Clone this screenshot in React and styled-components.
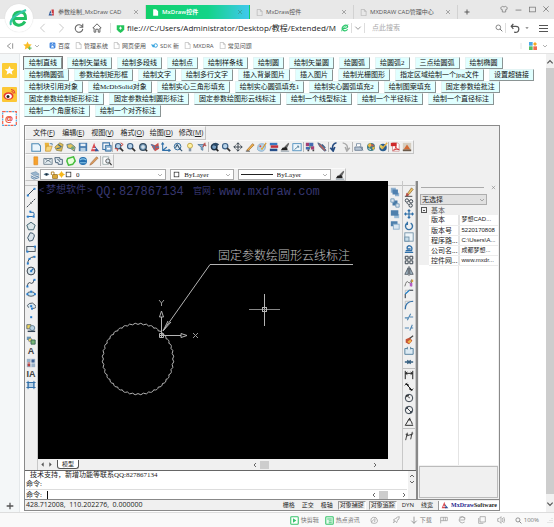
import React from "react";
import styled, { createGlobalStyle, css } from "styled-components";

const GlobalStyle = createGlobalStyle`
  * {
    box-sizing: border-box;
  }
  body {
    margin: 0;
    background: #fff;
    color: #222;
    font-family: "Open Sans", "Noto Sans CJK SC", sans-serif;
    font-size: 7px;
    line-height: 10px;
  }
  button, input, select {
    font: inherit;
    color: inherit;
    margin: 0;
    padding: 0;
    border: 0;
    background: none;
    border-radius: 0;
    outline: none;
  }
  svg {
    display: block;
    flex: none;
  }
`;

/* ---------- icons ---------- */

const dark = "#3c4650";
const blue = "#2f6fa8";
const line = { fill: "none", stroke: dark, strokeWidth: 1.2 };
const dot = (x, y) => <rect x={x - 1} y={y - 1} width="2.4" height="2.4" fill="#2a7fd0" />;
const lens = (
  <>
    <circle cx="5" cy="5" r="3.2" fill="#b9d4ea" stroke="#3d6288" strokeWidth="1.4" />
    <path d="M7.4 7.4L11 11" stroke="#333" strokeWidth="2" />
  </>
);

const icons = {
  page: <path d="M2 .8h5.500L10.500 4v7.500H2zM7.500 1v3h3" fill="none" stroke="#aaa" />,
  cad: (
    <>
      <path d="M1 11L4 2l3 9z" fill="#2b5797" />
      <path d="M6 1h4v10H7z" fill="#c9373f" />
      <path d="M3 8h6" stroke="#fff" />
    </>
  ),
  cadRed: (
    <>
      <path d="M1 11L5 1l3 10z" fill="#d94b50" />
      <path d="M6 11V5l5 6z" fill="#32569a" />
      <path d="M3 8h4" stroke="#fff" strokeWidth="1.2" />
    </>
  ),
  fileNew: <path d="M1 2h8l2.500 3v6H1z" fill="#eaf5fc" stroke="#4b89b5" strokeWidth="1.300" />,
  open: (
    <>
      <path d="M2 1h5l1 10H3z" fill="#e9b33c" />
      <path d="M4 5h7l-2 6H3z" fill="#f8d77d" stroke="#bb8623" strokeWidth=".7" />
      <path d="M8 2h3v2" fill="none" stroke="#4277a0" />
    </>
  ),
  openWeb: (
    <>
      <path d="M1 6l6-5 4 2-2 8-6-1z" fill="#e4bf55" stroke="#7c7440" strokeWidth=".8" />
      <path d="M5 3l4 3M3 8l5-1" stroke="#38658b" strokeWidth="1.300" />
    </>
  ),
  openKey: (
    <>
      <path d="M1 3l5-1 5 4-1 5-4-3-4-1z" fill="#e5c75d" stroke="#517386" />
      <circle cx="8" cy="7" r="2" fill="#71a57c" />
    </>
  ),
  save: (
    <>
      <rect x="1" y="1" width="10" height="10" fill="#4479ae" />
      <rect x="3" y="2" width="6" height="3" fill="#e6eff7" />
      <rect x="3" y="7" width="6" height="4" fill="#b8d1e5" />
    </>
  ),
  saveAs: (
    <>
      <path d="M1 1h8v8H1z" fill="#fff" stroke="#3e75a8" strokeWidth="1.300" />
      <path d="M4 4h7v7H4z" fill="#8cb4d5" stroke="#336a9b" />
      <path d="M6 8h4" stroke="#fff" strokeWidth="2" />
    </>
  ),
  zoomWin: (
    <>
      {lens}
      <path d="M8 1l3 2-3 2M1 8h3v3" fill="none" stroke="#c84840" strokeWidth="1.2" />
    </>
  ),
  zoomAll: lens,
  zoomExt: (
    <>
      <circle cx="6" cy="6" r="4" fill="#7fa5c2" stroke="#344d63" strokeWidth="1.500" />
      <path d="M3.500 6h5M6 3.500v5" stroke="#fff" />
      <path d="M9 9l2 2" stroke="#222" strokeWidth="1.800" />
    </>
  ),
  hand: (
    <>
      <path d="M1 2l5 2 4-3 1 7-5 3-3-4z" fill="#c5504d" />
      <path d="M1 3l4 2v4M7 6h4" fill="none" stroke="#477cb1" strokeWidth="1.500" />
    </>
  ),
  ucs: <path d="M2 1v9h9M2 10l5-4M.5 3L2 1l1.500 2M9 8.500l2 1.500-2 1.500" fill="none" stroke={blue} strokeWidth="1.300" />,
  orbit: (
    <>
      <circle cx="5.500" cy="5.500" r="4" fill="#dbe9f3" stroke="#366d9c" strokeWidth="1.200" />
      <path d="M3 7l2-4 3 5M8 8l3 3" fill="none" stroke="#31516c" strokeWidth="1.300" />
    </>
  ),
  bulb: (
    <>
      <circle cx="6" cy="4.500" r="3" fill="#fff2a0" stroke="#b99b3a" />
      <path d="M4.500 8.500h3M4.500 10.500h3" stroke="#607890" strokeWidth="1.300" />
    </>
  ),
  filter: (
    <>
      <path d="M1 3h9L7 6v4L5 9V6z" fill="#8eb3d2" stroke="#3b668d" strokeWidth=".8" />
      <path d="M8 2l3 3M10 1L7 6" stroke="#c24e48" strokeWidth="1.300" />
    </>
  ),
  eyeZoom: (
    <>
      <circle cx="5" cy="6" r="3.300" fill="#779fc3" stroke="#20354a" strokeWidth="1.800" />
      <path d="M2 3q5-4 9 0L8 5" fill="#2b4966" />
      <path d="M7.500 8.500L10 11" stroke="#222" strokeWidth="2" />
    </>
  ),
  pan: <path d="M6 1v10M1 6h10M4 3l2-2 2 2M4 9l2 2 2-2M3 4L1 6l2 2M9 4l2 2-2 2" {...line} />,
  pencil: (
    <>
      <path d="M2 10L9 2l2 1.500-7 7z" fill="#efb04d" stroke="#8c5a20" strokeWidth=".7" />
      <path d="M1 11h5" stroke="#444" />
    </>
  ),
  palette: (
    <>
      <path d="M1 6q0-4 5-4t4 5-6 4-3-5z" fill="#b6d3e8" stroke="#6395bd" strokeWidth=".7" />
      <circle cx="4" cy="5" r="1.200" fill="#d95040" />
      <circle cx="6" cy="8" r="1.200" fill="#e2a82a" />
      <path d="M7 7l4-6" stroke="#d59a3c" strokeWidth="1.500" />
    </>
  ),
  layersColor: (
    <>
      <rect x="1" y="1" width="9" height="3" fill="#3978c0" />
      <rect x="2" y="4" width="9" height="3" fill="#c0303c" />
      <rect x="1" y="8" width="9" height="3" fill="#264e8a" />
    </>
  ),
  brush: (
    <>
      <path d="M5 6l5-5 1 1-3 6z" fill="#666" />
      <path d="M1 10l2-3 4-1 2 2v2z" fill="#222" />
      <path d="M1 11h10" stroke="#798b97" />
    </>
  ),
  window: (
    <>
      <rect x="1" y="2" width="10" height="8.500" fill="#eef6fb" stroke="#4489bb" />
      <path d="M3 9l5-4M6 5h2v2" fill="none" stroke="#4a7794" />
    </>
  ),
  blocks: (
    <>
      <path d="M1 1h4v4H1zM7 5h4v4H7z" fill="#a43f74" />
      <path d="M5 1h5v4H5zM1 6h5v3H1z" fill="#436bb1" />
      <path d="M3 9h2v2H3zM9 9h2v2H9z" fill="#454545" />
      <path d="M5 5h2v2H5z" fill="#58a060" />
    </>
  ),
  pick: (
    <>
      <path d="M1 1l4 2 6 7-2 1-6-6z" fill="#bb625d" stroke="#42658b" />
      <path d="M6 3l4 4" stroke="#345780" strokeWidth="1.500" />
    </>
  ),
  undo: <path d="M9 1Q3 2 4.500 10M1.500 7L5 11l2-5" fill="none" stroke="#254b80" strokeWidth="1.900" />,
  redo: <path d="M2 1q7 1 5.500 9M10.500 7L7 11 5 6" fill="none" stroke="#aaa" strokeWidth="1.700" />,
  print: (
    <>
      <path d="M3 5V2h5v3" fill="#fff" stroke="#778ba0" />
      <path d="M1 6h9v4H1zM7 5l4 5" fill="#b6c4d3" stroke="#667991" />
    </>
  ),
  globe: (
    <>
      <circle cx="6" cy="6" r="4.800" fill="#3f7d88" />
      <path d="M2 4l3-3 2 3-3 3zM7 7l4-2-2 5z" fill="#edb942" />
      <path d="M6 2l4 2-3 2z" fill="#cc594a" />
      <path d="M3 8l3 1" stroke="#fff" />
    </>
  ),
  globeEdit: (
    <>
      <circle cx="6" cy="6.500" r="4.500" fill="#295d8f" />
      <path d="M3 3l3 2-1 4-3-3z" fill="#e4cf62" />
      <path d="M5 8l6-7" stroke="#e6b143" strokeWidth="1.700" />
    </>
  ),
  pdf: (
    <>
      <path d="M3 1h6l2 2v8H3z" fill="#fff" stroke="#b66" strokeWidth=".7" />
      <rect x="1" y="1" width="7" height="4" fill="#cf282a" />
      <path d="M4 10q3-2 3-5 0 4 4 4-4-1-7 1" fill="none" stroke="#cf282a" />
    </>
  ),
  image: (
    <>
      <rect x="1" y="1" width="10" height="10" fill="#d5cdbf" />
      <path d="M2 9l4-6 4 6z" fill="#d36a35" />
      <path d="M1 9h10v2H1z" fill="#6b5949" />
    </>
  ),
  clip: <path d="M3.500 1h4.500v9.500H3.500z" fill="#f6a12c" stroke="#e28a19" strokeWidth=".8" />,
  photo: (
    <>
      <path d="M1 3h10v7H1z" fill="#e6eef2" stroke="#657785" />
      <path d="M3 8l3-3 4 3M2 3l4 3 4-3" fill="none" stroke="#657785" />
    </>
  ),
  cloud: <path d="M1 2h6v2h3v6H5V8H2zM4 4q2 0 3 3" fill="#e2ebf1" stroke="#50687d" strokeWidth="1.200" />,
  shape: <path d="M2 3l7-2 2 5-3 4-5 1-2-5z" fill="#e8ffdd" stroke="#46bd3d" strokeWidth="1.800" />,
  earth: (
    <>
      <circle cx="6" cy="6" r="4.800" fill="#236eae" />
      <path d="M2 5q4-3 8 0M2.500 8h7" fill="none" stroke="#8cc7e8" strokeWidth="1.300" />
    </>
  ),
  crayon: <path d="M1 11l1.500-3L9 1l2 1.500L4 9.500z" fill="#d89c5d" stroke="#995b32" strokeWidth=".6" />,
  findPage: (
    <>
      <path d="M1 1h7v9H1z" fill="#fff" stroke="#9aa" />
      <circle cx="7" cy="6" r="2.500" fill="#dde7ee" stroke="#444" />
      <path d="M9 8l2.500 3" stroke="#333" strokeWidth="1.500" />
    </>
  ),
  layers: (
    <>
      <path d="M1 4l6-2 4 3-6 2z" fill="#9bb6ce" stroke="#6488a8" strokeWidth=".7" />
      <path d="M1 7l4 2 6-2M1 9l4 2 6-2" fill="none" stroke="#5d86ad" strokeWidth="1.200" />
    </>
  ),
  eye: (
    <>
      <path d="M1 6q5-5 10 0-5 4-10 0z" fill="#54748b" />
      <circle cx="6" cy="6" r="1.700" fill="#162733" />
    </>
  ),
  unlock: (
    <>
      <path d="M2 6V1.500h4V6" fill="none" stroke="#b58221" strokeWidth="1.400" />
      <rect x="4" y="5.500" width="7" height="5.500" fill="#d9a634" stroke="#8f6310" />
    </>
  ),
  sun: (
    <>
      <circle cx="6" cy="6" r="3.800" fill="#f6b71c" />
      <path d="M6 .5v11M.5 6h11" stroke="#f6b71c" strokeWidth="1.500" />
    </>
  ),
  swatch: <rect x="2" y="2" width="8" height="8" fill="#fff" stroke="#222" strokeWidth="1.200" />,
  line: <>{<path d="M2 10l8-8" {...line} />}{dot(2, 10)}{dot(10, 2)}</>,
  ray: (
    <>
      <path d="M1 11L11 1" {...line} strokeDasharray="3 1" />
      <circle cx="6" cy="6" r="1.300" fill="#888" />
    </>
  ),
  polyline: <>{<path d="M1 9h7q3-1 1-5H5" {...line} stroke={blue} />}{dot(2, 9)}{dot(9, 9)}{dot(5, 3)}</>,
  polygon: <path d="M6 1.500L11 5 9 10.500H3L1 5z" fill="#dce7ea" stroke="#466874" strokeWidth="1.200" />,
  blob: <path d="M5 1q5 0 5 4l-2 5-4 1-2-4z" fill="#dbe5ec" stroke="#425a6c" strokeWidth="1.200" />,
  rect: <>{<rect x="1" y="3" width="10" height="6" fill="#e9eff2" stroke={dark} />}{dot(1.500, 9)}{dot(10.500, 3)}</>,
  arc: <>{<path d="M2 11Q2 3 10 2" {...line} />}{dot(2, 10)}{dot(10, 2)}{dot(4, 4.500)}</>,
  circle: (
    <>
      <circle cx="6" cy="6" r="4.700" fill="#d9e6ed" stroke={dark} strokeWidth="1.200" />
      <path d="M6 6l3-3" stroke={blue} strokeWidth="1.500" />
      {dot(6, 6)}
    </>
  ),
  spline: <>{<path d="M1.500 10q1-6 4-4t4-4" {...line} />}{dot(1.500, 10)}{dot(10, 2)}</>,
  ellipse: <>{<ellipse cx="6" cy="6" rx="4.600" ry="2.700" fill="#cae4f1" stroke={dark} />}{dot(1.500, 6)}{dot(10.500, 6)}{dot(6, 3)}</>,
  ellipseArc: <>{<path d="M3 8Q0 5 4 3t7 2-4 4" fill="#d7e6ef" stroke={dark} />}{dot(7, 9)}{dot(6, 6)}</>,
  point: dot(6, 6),
  hatch: (
    <>
      <path d="M1 2h5v5H1z" fill="#edd35d" stroke="#576470" />
      <circle cx="7.500" cy="6" r="3" fill="#b9d2e1" stroke="#55748a" />
      <path d="M2 10h9" stroke="#345" strokeWidth="1.700" />
    </>
  ),
  block: (
    <>
      <path d="M1 2h5v4H1z" fill="#6895b4" />
      <circle cx="5" cy="6" r="2.200" fill="#ead765" stroke="#668" strokeWidth=".6" />
      <path d="M6 6h5v5H6z" fill="#76b675" stroke="#345f57" />
    </>
  ),
  table: (
    <>
      <path d="M1 1h10v10H1z" fill="#9bb2c8" />
      <path d="M2 5h3v5H2z" fill="#b84141" />
      <path d="M6 2h4v4H6z" fill="#42679b" />
      <path d="M1 6h10M6 1v10" stroke="#eee" />
    </>
  ),
  frame: (
    <>
      <rect x="2.500" y="3" width="7" height="6" fill="#b8d1e6" stroke={blue} />
      <path d="M.5 3h11M.5 9h11M2.500 1v10M9.500 1v10" stroke={blue} strokeWidth="1.100" />
    </>
  ),
  front: (
    <>
      <path d="M1 1h6v6H1zM6 7h5v4H6z" fill="#8fb0ce" />
      <rect x="3" y="3" width="6.500" height="6" fill="#4f80b0" />
    </>
  ),
  back: (
    <>
      <rect x="3" y="3" width="6" height="6" fill="#4779a6" />
      <path d="M1 1h4v4H1zM7 7h4v4H7z" fill="#e0e9f0" stroke="#6e96b8" />
    </>
  ),
  above: (
    <>
      <rect x="5" y="6" width="6" height="5" fill="#9bbdd8" />
      <rect x="1" y="1.500" width="9" height="6.500" fill="#4e80ad" />
    </>
  ),
  below: (
    <>
      <rect x="1" y="1.500" width="8" height="6" fill="#4e80ad" />
      <rect x="4" y="5" width="7" height="6" fill="#dce8f1" stroke="#86abc9" />
    </>
  ),
  erase: (
    <>
      <path d="M4 8l5-7 2 2-5 6z" fill="#efc467" stroke="#75521f" strokeWidth=".7" />
      <path d="M3 7l3 2-1 2H2z" fill="#bb5048" />
      <path d="M1 11.200h9" stroke="#333" />
    </>
  ),
  copy: (
    <>
      <circle cx="3.500" cy="3" r="2" {...line} />
      <circle cx="8.500" cy="4" r="2" {...line} />
      <circle cx="8" cy="9" r="2" {...line} />
      <path d="M3 6l3 2" stroke={dark} />
    </>
  ),
  move: <path d="M6 1v10M1 6h10M4.500 2.500L6 1l1.500 1.500M4.500 9.500L6 11l1.500-1.500M2.500 4.500L1 6l1.500 1.500M9.500 4.500L11 6 9.500 7.500" fill="none" stroke={blue} strokeWidth="1.400" />,
  rotate: <path d="M8 2.500a4.200 4.200 0 1 1-4 0M4 1v3H1.500" fill="none" stroke="#3672a6" strokeWidth="1.700" />,
  scale: (
    <>
      <rect x="1" y="1" width="10" height="10" fill="#edf4f8" stroke="#6b8ca4" />
      <rect x="1" y="6" width="5" height="5" fill="#c8deeb" stroke="#6b8ca4" />
    </>
  ),
  offset: <path d="M1 10h10M2 8h7Q11 3 6 2 3 3 4 6h4" fill="none" stroke={blue} strokeWidth="1.600" />,
  array: <path d="M1.500 1.500h3.500v3.500H1.500zM7 1.500h3.500v3.500H7zM1.500 7h3.500v3.500H1.500zM7 7h3.500v3.500H7z" {...line} />,
  mirror: <path d="M5 2v8H1zM7 2v8h4zM6 0v12" fill="#a9bdca" stroke={dark} strokeWidth=".9" />,
  reshape: (
    <>
      <path d="M1 10q2-8 4-5t4-3v8" {...line} stroke="#777" />
      <path d="M7 6h3v4H7z" fill="#b75cc5" />
      <path d="M9 2h2v3H9z" fill="#dfa336" />
    </>
  ),
  chamfer: (
    <>
      <path d="M1.500 11V1.500H11" fill="none" stroke="#aaa" strokeWidth=".8" />
      <path d="M1.500 11V6l5-4.500H11" fill="none" stroke={dark} strokeWidth="1.200" />
      <path d="M1.500 6l5-4.500" stroke="#2f8fd8" strokeWidth="1.300" />
    </>
  ),
  fillet: (
    <>
      <path d="M1.500 11V1.500H11" fill="none" stroke="#aaa" strokeWidth=".8" />
      <path d="M1.500 11Q1.500 2 11 1.500" fill="none" stroke={blue} strokeWidth="1.500" />
    </>
  ),
  trim: <path d="M1 7h4M7 6h4M4 10l4-8" fill="none" stroke="#4f86b3" strokeWidth="1.300" />,
  extend: <path d="M1 6h5M7 9l3-7M8 6h3" fill="none" stroke="#4f86b3" strokeWidth="1.300" />,
  explode: (
    <>
      <path d="M2 5l5-2 3 4-4 4-4-2z" fill="#c55336" />
      <path d="M4 8l4-3 1 3-3 2z" fill="#efb348" />
      <path d="M7 4l4-3" stroke="#444" strokeWidth="1.400" />
    </>
  ),
  breakAt: <path d="M4 3H1v7h10V3H8M4 1v3M8 1v3" fill="#dceaf3" stroke="#527f9d" strokeWidth="1.100" />,
  join: <path d="M1 6h10M4 4l2 2-2 2M8 4L6 6l2 2" fill="none" stroke="#365f80" strokeWidth="1.600" />,
  dimLinear: <path d="M1.500 1v10M10.500 1v10M2 4h8M4 2.500L2 4l2 1.500M8 2.500L10 4 8 5.500" fill="none" stroke="#222" strokeWidth="1.200" />,
  dimAligned: <path d="M2 2l8 8M1 4l3-3M8 11l3-3M3 3h2v2zM9 9H7V7z" fill="#222" stroke="#222" strokeWidth="1.200" />,
  dimRadius: (
    <>
      <circle cx="6" cy="6" r="4.500" {...line} />
      <path d="M3 3l4 3M3 3h3M3 3v2" stroke="#222" />
    </>
  ),
  dimDiameter: (
    <>
      <circle cx="6" cy="6" r="4.500" {...line} />
      <path d="M3 3l6 6M3 5V3h2M9 7v2H7" {...line} />
    </>
  ),
  dimAngle: <path d="M7 1L1.500 10H11M6 3q4 2 4 6M5 4l2-2 1 2" fill="none" stroke="#333" strokeWidth="1.200" />,
  dimEdit: <path d="M2 11L4 2M8 10l2-9M3 6l6-2M2 4h3M8 5l3-2" fill="none" stroke="#333" strokeWidth="1.100" />,
  paw: (
    <>
      <rect x="1" y="1" width="10" height="10" rx="2" fill="#3d83df" />
      <path d="M3.500 8.500L6 5.500l2.500 3v1h-5z" fill="#fff" />
      <path d="M3 5h1.500M5 3h2M8 5h1.500" stroke="#fff" strokeWidth="1.500" />
    </>
  ),
  star: (
    <>
      <path d="M6 .5l1.700 3.700 4 .3-3 2.800.9 4L6 9.300 2.400 11.300l.9-4-3-2.800 4-.3z" fill="#fbbd25" />
      <path d="M6.500 9.500h5M9 7v5" stroke="#59b756" strokeWidth="1.300" />
    </>
  ),
  link: (
    <>
      <circle cx="8" cy="6" r="3" fill="none" stroke="#38a4df" strokeWidth="1.700" />
      <path d="M0 4l6 1v4H3z" fill="#38a4df" />
    </>
  ),
  previous: <path d="M8 1L3 6l5 5" fill="none" stroke="#c8c8c8" strokeWidth="1.200" />,
  next: <path d="M4 1l5 5-5 5" fill="none" stroke="#c8c8c8" strokeWidth="1.200" />,
  down: <path d="M2 4l4 4 4-4" fill="none" stroke="#888" strokeWidth="1.300" />,
  caret: <path d="M1 4h10L6 9z" fill="#777" />,
  up: <path d="M2 8l4-4 4 4" fill="none" stroke="#555" strokeWidth="1.800" />,
  downDark: <path d="M2 4l4 4 4-4" fill="none" stroke="#555" strokeWidth="1.800" />,
  left: <path d="M8 2L4 6l4 4" fill="none" stroke="#444" strokeWidth="1.600" />,
  right: <path d="M4 2l4 4-4 4" fill="none" stroke="#444" strokeWidth="1.600" />,
  leftSolid: <path d="M8 2v8L4 6z" fill="#555" />,
  rightSolid: <path d="M4 2v8l4-4z" fill="#555" />,
  reload: <path d="M10 4.500A4.500 4.500 0 1 0 10.500 7M10.500 1v4h-4" fill="none" stroke="#666" strokeWidth="1.300" />,
  home: <path d="M1 6l5-5 5 5H9.500v5h-2V7.500h-3V11h-2V6z" fill="none" stroke="#666" strokeWidth="1.200" />,
  shield: (
    <>
      <path d="M1 1.500h10V7q-1 3-5 5Q2 10 1 7z" fill="#24c45b" />
      <path d="M6 3.500v4M4 5.500h4" stroke="#fff" strokeWidth="1.200" />
    </>
  ),
  e: (
    <>
      <path d="M10 8q-4 4-7 1t1-6 6 1q0 2-7 3" fill="none" stroke="#2dc76d" strokeWidth="1.900" />
      <path d="M1 11Q0 7 11 1" fill="none" stroke="#2dc76d" strokeWidth="1.200" />
    </>
  ),
  search: (
    <>
      <circle cx="5" cy="5" r="3.500" fill="none" stroke="#777" strokeWidth="1.300" />
      <path d="M7.500 7.500L11 11" stroke="#777" strokeWidth="1.500" />
    </>
  ),
  revert: <path d="M4 1L1.500 4 4 7M2 4h5q4 0 3.500 4T5 11" fill="none" stroke="#555" strokeWidth="1.500" />,
  menu: <path d="M0 2h12M0 6h12M0 10h12" stroke="#555" strokeWidth="1.500" />,
  shirt: <path d="M4 2L1 4l1 3h1.500v3.500h5V7H10l1-3-3-2q-2 2-4 0z" fill="none" stroke="#777" strokeWidth="1.100" />,
  min: <path d="M1 7h10" stroke="#777" strokeWidth="1.400" />,
  max: <rect x="1" y="2" width="10" height="8" fill="none" stroke="#777" strokeWidth="1.300" />,
  close: <path d="M2 2l8 8M10 2l-8 8" stroke="#777" strokeWidth="1.200" />,
  closeWhite: <path d="M2 2l8 8M10 2l-8 8" stroke="#3a8f80" strokeWidth="1.200" />,
  pageWhite: <path d="M2 .5h5L10.500 4v7.500H2z" fill="#fff" />,
  plus: <path d="M1 6h10M6 1v10" stroke="#555" strokeWidth="1.900" />,
  grid: (
    <>
      <path d="M0 0h5.500v5.500H0z" fill="#4ba9e8" />
      <path d="M9 0l3 3-3 3-3-3z" fill="#f5a623" />
      <path d="M0 6.500h5.500V12H0z" fill="#55bf63" />
      <path d="M6.500 6.500H12V12H6.500z" fill="#f06a50" />
    </>
  ),
  collapse: <path d="M7 2L2 6l5 4M10 2v8" fill="none" stroke="#777" strokeWidth="1.200" />,
  play: (
    <>
      <rect x="1" y="1" width="10" height="10" rx="1" fill="#fff" stroke="#36c36b" strokeWidth="1.400" />
      <path d="M4 3l4.500 3L4 9z" fill="#36c36b" />
    </>
  ),
  news: (
    <>
      <rect x="1" y="1" width="10" height="10" rx="1" fill="#e7faee" stroke="#36c36b" strokeWidth="1.400" />
      <path d="M3 4h6M5 6.500h4M5 9h4" stroke="#36c36b" strokeWidth="1.200" />
    </>
  ),
  gauge: <path d="M2 9Q0 3 5 2t6 4-5 5-3-3 4-4 0 5" fill="none" stroke="#999" strokeWidth="1.100" />,
  rocket: <path d="M2 10l2-3-2-1 3-2q3-3 6-3 0 4-3 6L7 10 5 8zM7 4l1 1" fill="none" stroke="#999" strokeWidth="1.100" />,
  download: <path d="M6 1v10M2 7l4 4 4-4" fill="none" stroke="#888" strokeWidth="1.200" />,
  flag: <path d="M1 11V2h10v5H1M5 2v5M8 2v5" fill="none" stroke="#999" strokeWidth="1.100" />,
  ie: <path d="M10 9Q6 12 3 9t0-6 7 0v3H2M2 2q5-3 9 1" fill="none" stroke="#999" strokeWidth="1.100" />,
  copyWin: <path d="M3 1h8v8H3zM1 3v8h7" fill="none" stroke="#999" strokeWidth="1.100" />,
  sound: <path d="M1 4h2l3-3v10L3 8H1zM8 3q2 3 0 6M10 1.500q3 4.500 0 9" fill="none" stroke="#999" strokeWidth="1.100" />,
  grip: <path d="M10 2v1M10 6v1M10 10v1M6 6v1M6 10v1M2 10v1" stroke="#aaa" strokeWidth="2" />,
  dots: <path d="M6 1v2M6 5v2M6 9v2" stroke="#bbb" strokeWidth="1.500" />,
};

const Icon = ({ name, size = 10 }) => (
  <svg width={size} height={size} viewBox="0 0 12 12" aria-hidden="true">
    {icons[name]}
  </svg>
);

/* ---------- browser chrome ---------- */

const Page = styled.div`
  position: relative;
  display: flex;
  flex-direction: column;
  min-height: 100vh;
`;

const Logo = styled.div`
  position: absolute;
  top: 4px;
  left: 5px;
  width: 28px;
  height: 28px;
  border-radius: 50%;
  background: #fff;
  box-shadow: 0 0 1px #ccc;
  display: grid;
  place-items: center;
`;

const TabBar = styled.div`
  display: flex;
  align-items: stretch;
  height: 19px;
  padding: 5px 4px 0 42px;
  background: #e8e8e8;
  color: #555;
  font-size: 6px;
`;

const TabItem = styled.div`
  display: flex;
  align-items: center;
  flex: 0 1 104px;
  min-width: 0;
  padding: 0 5px 0 6px;
  border-right: 1px solid #d2d2d2;
  ${({ $active }) =>
    $active &&
    css`
      color: #fff;
      font-weight: 600;
      border-color: transparent;
      background: linear-gradient(90deg, #12d06a 0%, #13d488 60%, #40c8ee 100%);
    `}
`;

const TabTitle = styled.button`
  display: flex;
  align-items: center;
  gap: 3px;
  flex: 1;
  min-width: 0;
  white-space: nowrap;
`;

const IconButton = styled.button`
  display: grid;
  place-items: center;
  flex: none;
  min-width: 8px;
`;

const NewTab = styled(IconButton)`
  margin-left: 5px;
`;

const WindowButtons = styled.div`
  display: flex;
  gap: 6px;
  align-self: flex-start;
  margin-left: auto;
`;

const NavBar = styled.div`
  display: flex;
  align-items: center;
  height: 19px;
  padding: 0 6px 0 38px;
  border-bottom: 1px solid #e6e6e6;
`;

const NavButtons = styled.div`
  display: flex;
  gap: 8px;
  margin-right: 5px;
  padding-right: 8px;
  border-right: 1px solid #ddd;
`;

const UndoButtons = styled.div`
  display: flex;
  align-items: center;
  gap: 3px;
  padding: 0 8px 0 2px;
`;

const Address = styled.input`
  flex: 0 1 214px;
  min-width: 0;
  margin-left: 2px;
  font-size: 8px;
  color: #222;
`;

const SearchInput = styled.input`
  flex: 1;
  min-width: 0;
  margin-left: 5px;
  &::placeholder {
    color: #aaa;
  }
`;

const Bar = styled.span`
  width: 1px;
  height: 10px;
  margin: 0 2px;
  background: #ddd;
`;

const Bookmarks = styled.nav`
  display: flex;
  align-items: center;
  gap: 5px;
  height: 16px;
  padding: 0 6px;
  border-bottom: 1px solid #e4e4e4;
  color: #555;
  font-size: 6px;
`;

const Favorites = styled.div`
  display: flex;
  align-items: center;
  gap: 1px;
  padding: 0 3px 0 4px;
`;

const Bookmark = styled.a`
  display: flex;
  align-items: center;
  gap: 2px;
  color: inherit;
  text-decoration: none;
  white-space: nowrap;
`;

const Push = styled.span`
  flex: 1;
`;

/* ---------- page body ---------- */

const Main = styled.div`
  display: flex;
  flex: 1;
`;

const SideBar = styled.aside`
  display: flex;
  flex-direction: column;
  align-items: center;
  gap: 9px;
  flex: none;
  width: 20px;
  padding: 9px 0 2px;
  background: #f4f7f8;
  border-right: 1px solid #e4e8ea;
`;

const Content = styled.main`
  display: flex;
  flex-direction: column;
  flex: 1;
  min-width: 0;
  padding: 3px 0 1px 4px;
`;

const Commands = styled.div`
  display: flex;
  flex-wrap: wrap;
  column-gap: 5px;
  margin-bottom: 8px;
`;

const Command = styled.button`
  height: 12px;
  padding: 0 4px;
  border: 1px solid;
  border-color: #e4f4f4 #8a9494 #8a9494 #e4f4f4;
  box-shadow: ${({ $focused }) => ($focused ? "0 0 0 1px #777" : "none")};
  background: #e0ffff;
  color: #111;
  font-family: "Liberation Serif", "Noto Sans CJK SC", serif;
  line-height: 9px;
  white-space: nowrap;
`;

const ScrollTrack = styled.div`
  display: flex;
  flex-direction: column;
  align-items: center;
  flex: none;
  width: 8px;
  padding: ${({ $pad }) => $pad}px 0;
  background: #f1f1f1;
`;

const ScrollThumb = styled.div`
  flex: 1;
  width: 100%;
  margin: 2px 0 6px;
  background: #cdcdcd;
`;

/* ---------- CAD control ---------- */

const Cad = styled.section`
  display: flex;
  flex-direction: column;
  flex: 1;
  margin-right: 46px;
  border: 1px solid #8a8a8a;
  background: #f0f0f0;
`;

const Strip = styled.div`
  display: flex;
  align-items: center;
  align-self: flex-start;
  height: ${({ $tall }) => ($tall ? 14 : 13)}px;
  width: ${({ $width }) => $width}px;
  max-width: 100%;
  padding-left: 4px;
  border: 1px solid;
  border-color: #fafafa #c4c4c4 #c4c4c4 #fafafa;
`;

const MenuButton = styled.button`
  flex: 1;
  text-align: left;
  padding-left: 3px;
  white-space: nowrap;
`;

const IconGroup = styled.div`
  display: flex;
  justify-content: space-around;
  flex: ${({ $count }) => $count};
  & + & {
    border-left: 1px solid #b8b8b8;
  }
`;

const ComboBox = styled.div`
  display: flex;
  align-items: center;
  flex: ${({ $grow }) => $grow};
  min-width: 0;
  height: 11px;
  margin-right: 4px;
  padding: 0 2px;
  border: 1px solid #aaa;
  background: #fff;
`;

const Select = styled.select`
  appearance: none;
  flex: 1;
  min-width: 0;
  height: 9px;
  padding-left: 4px;
  font-family: "Liberation Serif", "Noto Sans CJK SC", serif;
`;

const LineSample = styled.span`
  width: 32px;
  border-top: 1px solid #222;
`;

const Workspace = styled.div`
  display: flex;
  flex: 1;
`;

const Editor = styled.div`
  display: flex;
  flex-direction: column;
  flex: 1;
  min-width: 0;
`;

const Stage = styled.div`
  display: flex;
  flex: 1;
`;

const ToolColumn = styled.div`
  flex: none;
  width: ${({ $wide }) => ($wide ? 15 : 13)}px;
  padding-top: 4px;
  border-right: 1px solid #c8c8c8;
`;

const ToolGroup = styled.div`
  display: grid;
  grid-auto-rows: 1fr;
  height: ${({ $height }) => $height}px;
  border-top: 1px solid #c0c0c0;
`;

const GlyphA = styled.span`
  font-family: "Liberation Sans", sans-serif;
  font-weight: bold;
  font-size: 9px;
  line-height: 10px;
  color: #444;
`;

const Drawing = styled.div`
  display: flex;
  flex-direction: column;
  flex: 1;
  min-width: 0;
`;

const Canvas = styled.div`
  flex: 1;
  overflow: hidden;
  background: #000;
`;

const SheetBar = styled.div`
  display: flex;
  align-items: center;
  height: 11px;
`;

const SheetTab = styled.button`
  height: 9px;
  margin-left: 3px;
  padding: 0 4px;
  border: 1px solid #555;
  border-top: 0;
  border-radius: 0 0 3px 3px;
  background: #fff;
  font-size: 6px;
  line-height: 8px;
`;

const HScroll = styled.div`
  display: flex;
  align-items: center;
  flex: none;
  width: ${({ $width }) => $width}px;
  height: 9px;
  margin-left: auto;
  padding-right: ${({ $end }) => $end}px;
`;

const HThumb = styled.div`
  width: 9px;
  height: 8px;
  margin: 0 auto 0 2px;
  background: #cdcdcd;
`;

const Console = styled.div`
  display: flex;
  border-top: 1px solid #666;
  background: #fff;
  color: #222;
  font-family: "Liberation Serif", "Noto Sans CJK SC", serif;
`;

const ConsoleText = styled.div`
  flex: 1;
  padding: 0 1px;
`;

const ConsoleLine = styled.div`
  height: 9px;
  line-height: 9px;
  padding-left: ${({ $indent }) => ($indent ? 4 : 0)}px;
`;

const Prompt = styled.label`
  display: flex;
  align-items: center;
  height: 10px;
  border-top: 1px solid #ddd;
`;

const CommandInput = styled.input`
  width: 60px;
  height: 8px;
  margin-left: 5px;
  border-left: 1px solid #111;
`;

const Panel = styled.div`
  display: flex;
  flex-direction: column;
  flex: none;
  width: 83px;
  border-left: 2px solid #888;
`;

const PanelHead = styled.div`
  display: flex;
  align-items: center;
  gap: 5px;
  height: 12px;
  padding: 0 2px 0 3px;
  &::before {
    content: "";
    flex: 1;
    border-top: 1px solid #aaa;
  }
`;

const PanelSelect = styled.div`
  display: flex;
  align-items: center;
  width: 67px;
  height: 11px;
  margin: 1px 2px 0;
  padding-right: 1px;
  border: 1px solid #adadad;
  background: #e1e1e1;
  select {
    font-family: inherit;
    padding-left: 1px;
  }
`;

const Properties = styled.div`
  flex: 1;
  margin: 0 1px;
  /* the column rule goes on below the last row */
  background: #fff linear-gradient(#e4e4e4, #e4e4e4) 39px 0 / 1px 100% no-repeat;
`;

const PropTable = styled.table`
  width: 100%;
  border-collapse: collapse;
  table-layout: fixed;
  th,
  td {
    height: 10px;
    padding: 0 0 0 2px;
    border-bottom: 1px solid #ececec;
    font-weight: 400;
    line-height: 9px;
    text-align: left;
    white-space: nowrap;
  }
  th {
    border-right: 1px solid #e4e4e4;
  }
  td {
    font-family: "Liberation Sans", "Noto Sans CJK SC", sans-serif;
    font-size: 6px;
  }
  td:first-child,
  .group {
    background: #f0f0f0;
    border: 0;
  }
  .group {
    color: #555;
  }
`;

const Expander = styled.button`
  display: grid;
  place-items: center;
  width: 6px;
  height: 6px;
  border: 1px solid #555;
  &::before {
    content: "";
    width: 2px;
    border-top: 1px solid #555;
  }
`;

const Description = styled.div`
  height: 32px;
  margin: 1px;
  border: 1px solid #bbb;
`;

const CadStatus = styled.div`
  display: flex;
  align-items: center;
  height: 11px;
  border-top: 1px solid #888;
`;

const Coordinates = styled.output`
  flex: 1;
  padding-left: 1px;
  white-space: pre;
`;

const Mode = styled.button`
  height: 9px;
  margin-right: 3px;
  padding: 0 1px;
  border: 1px solid;
  border-color: ${({ $on }) => ($on ? "#999 #fff #fff #999" : "transparent")};
  font-size: 6px;
  line-height: 7px;
`;

const Brand = styled.div`
  display: flex;
  align-items: center;
  gap: 2px;
  width: 61px;
  height: 9px;
  padding-left: 2px;
  background: #fff;
  border-left: 1px solid #999;
  font-family: "Liberation Serif", serif;
  font-size: 6px;
  font-weight: bold;
  b {
    color: #27278f;
  }
`;

const Footer = styled.footer`
  display: flex;
  align-items: center;
  justify-content: flex-end;
  height: 15px;
  padding-right: 1px;
  border-top: 1px solid #ddd;
  background: #f9f9f9;
  color: #777;
  font-size: 6px;
`;

const FooterButton = styled.button`
  display: flex;
  align-items: center;
  gap: 2px;
  margin-right: ${({ $gap }) => $gap}px;
`;

/* ---------- data ---------- */

const commands = [
  "绘制直线", "绘制矢量线", "绘制多段线", "绘制点", "绘制样条线", "绘制圆", "绘制矢量圆",
  "绘圆弧", "绘圆弧2", "三点绘圆弧", "绘制椭圆", "绘制椭圆弧", "参数绘制矩形框", "绘制文字",
  "绘制多行文字", "插入背景图片", "插入图片", "绘制光栅图形", "指定区域绘制一个jpg文件",
  "设置超链接", "绘制块引用对象", "绘McDbSolid对象", "绘制实心三角形填充", "绘制实心圆弧填充1",
  "绘制实心圆弧填充2", "绘制图案填充", "固定参数绘批注", "固定参数绘制矩形标注",
  "固定参数绘制圆形标注", "固定参数绘图形云线标注", "绘制一个线型标注", "绘制一个半径标注",
  "绘制一个直径标注", "绘制一个角度标注", "绘制一个对齐标注",
];

const menus = [["文件", "F"], ["编辑", "E"], ["视图", "V"], ["格式", "O"], ["绘图", "D"], ["修改", "M"]];

const mainTools = [
  ["fileNew", "open", "openWeb", "openKey", "save", "cadRed", "saveAs"],
  ["zoomWin", "zoomAll", "zoomExt", "hand", "ucs", "orbit", "bulb", "filter"],
  ["eyeZoom", "zoomAll", "pan", "pencil", "palette", "layersColor", "brush", "window"],
  ["blocks", "pick"],
  ["undo", "redo"],
  ["print", "globe", "globeEdit"],
  ["pdf", "image"],
];

const extraTools = [["clip", "photo", "cloud", "shape", "earth", "crayon"], ["findPage"]];

const drawTools = [
  "line", "ray", "polyline", "polygon", "blob", "rect", "arc", "circle", "spline",
  "ellipse", "ellipseArc", "point", "hatch", "block", "A", "table", "IA", "frame",
];

const orderTools = ["front", "back", "above", "below"];

const editTools = [
  "erase", "copy", "move", "rotate", "scale", "offset", "array", "mirror", "reshape",
  "chamfer", "fillet", "trim", "extend", "explode", "breakAt", "join",
];

const dimTools = ["dimLinear", "dimAligned", "dimRadius", "dimDiameter", "dimAngle"];

const properties = [
  ["版本", "梦想CAD..."],
  ["版本号", "5220170808"],
  ["程序路...", "C:\\Users\\A..."],
  ["公司名...", "成都梦想..."],
  ["控件网...", "www.mxdr..."],
];

const bookmarks = [
  ["paw", "百度"],
  ["page", "管理系统"],
  ["page", "网页使用"],
  ["link", "SDK 新"],
  ["page", "MXDRA"],
  ["page", "常见问题"],
];

const Tool = ({ name }) => (
  <IconButton aria-label={name}>
    {name === "A" || name === "IA" ? <GlyphA>{name}</GlyphA> : <Icon name={name} />}
  </IconButton>
);

const Tools = ({ groups }) =>
  groups.map((group, i) => (
    <IconGroup key={i} $count={group.length}>
      {group.map((name) => (
        <Tool key={name} name={name} />
      ))}
    </IconGroup>
  ));

const ToolStack = ({ names, height }) => (
  <ToolGroup $height={height}>
    {names.map((name) => (
      <Tool key={name} name={name} />
    ))}
  </ToolGroup>
);

const BrowserTab = ({ icon, title, active }) => (
  <TabItem $active={active}>
    <TabTitle>
      <Icon name={icon} size={7} />
      {title}
    </TabTitle>
    <IconButton aria-label="关闭">
      <Icon name={active ? "closeWhite" : "close"} size={6} />
    </IconButton>
  </TabItem>
);

// revision cloud: short arcs bulging outwards around the circle
const cloudPath = () => {
  const count = 40;
  const at = (i) => {
    const a = (i / count) * Math.PI * 2;
    return `${(100 + 34.6 * Math.cos(a)).toFixed(2)} ${(178 + 34.6 * Math.sin(a)).toFixed(2)}`;
  };
  let d = `M${at(0)}`;
  for (let i = 1; i <= count; i++) d += `A3.8 3.8 0 0 1 ${at(i)}`;
  return d;
};

const Scene = () => (
  <svg width="350" height="278" viewBox="0 0 350 278" fill="none" stroke="#b4b4b4" strokeWidth="1">
    <g fill="#37376f" stroke="none" fontFamily='"Liberation Mono", "Noto Sans CJK SC", monospace' fontSize="12">
      <text x="1" y="12" fontSize="9">&lt;</text>
      <text x="8" y="12" fontSize="10">梦想软件</text>
      <text x="49" y="12" fontSize="9">&gt;</text>
      <text x="58" y="14">QQ:</text>
      <text x="81" y="14">827867134</text>
      <text x="155" y="13" fontSize="9">官网:</text>
      <text x="181" y="14">www.mxdraw.com</text>
    </g>
    <text x="180" y="79" fill="#c0c0c0" stroke="none" fontFamily='"Noto Sans CJK SC", sans-serif' fontWeight="300" fontSize="12">
      固定参数绘圆形云线标注
    </text>
    <path d="M125 150L172 83.500H315" />
    <path d="M125 150l5-10M125 150l8-9" />
    <path d={cloudPath()} />
    <path d="M123.500 152v-16M126 154.500h17M121.500 152.500h4v4h-4zM121.500 154.500h4M123.500 152.500v4" />
    <path d="M123.500 130l-2 6h4zM149 154.500l-6-2v4z" />
    <path d="M121 119l2.500 3 2.500-3M123.500 122v3M155 152l5 5M160 152l-5 5" stroke="#999" />
    <path d="M226.500 113v32" />
    <path d="M211 128.500h31" stroke="#888" />
    <rect x="224.500" y="126.500" width="4" height="4" />
  </svg>
);

const App = () => (
  <>
    <GlobalStyle />
    <Page>
      <TabBar>
        <BrowserTab icon="cad" title="参数绘制_MxDraw CAD" />
        <BrowserTab icon="pageWhite" title="MxDraw控件" active />
        <BrowserTab icon="page" title="MxDraw控件" />
        <BrowserTab icon="page" title="MXDRAW CAD管理中心" />
        <NewTab aria-label="新标签"><Icon name="plus" size={6} /></NewTab>
        <WindowButtons>
          <IconButton aria-label="皮肤"><Icon name="shirt" size={8} /></IconButton>
          <IconButton aria-label="最小化"><Icon name="min" size={7} /></IconButton>
          <IconButton aria-label="最大化"><Icon name="max" size={7} /></IconButton>
          <IconButton aria-label="关闭窗口"><Icon name="close" size={8} /></IconButton>
        </WindowButtons>
      </TabBar>
      <NavBar>
        <NavButtons>
          <IconButton aria-label="后退"><Icon name="previous" /></IconButton>
          <IconButton aria-label="前进"><Icon name="next" /></IconButton>
          <IconButton aria-label="刷新"><Icon name="reload" /></IconButton>
          <IconButton aria-label="主页"><Icon name="home" /></IconButton>
        </NavButtons>
        <Icon name="shield" size={9} />
        <Address aria-label="地址" defaultValue="file:///C:/Users/Administrator/Desktop/教程/Extended/M" />
        <Icon name="e" size={8} />
        <Bar />
        <IconButton aria-label="历史地址"><Icon name="down" size={8} /></IconButton>
        <Bar />
        <SearchInput aria-label="搜索" placeholder="点此搜索" />
        <IconButton aria-label="搜索"><Icon name="search" size={8} /></IconButton>
        <Bar />
        <UndoButtons>
          <IconButton aria-label="恢复"><Icon name="revert" /></IconButton>
          <IconButton aria-label="最近关闭"><Icon name="caret" size={4} /></IconButton>
        </UndoButtons>
        <IconButton aria-label="菜单"><Icon name="menu" size={9} /></IconButton>
      </NavBar>
      <Bookmarks>
        <IconButton aria-label="收起"><Icon name="collapse" size={8} /></IconButton>
        <Favorites>
          <IconButton aria-label="收藏"><Icon name="star" size={9} /></IconButton>
          <IconButton aria-label="收藏列表"><Icon name="down" size={6} /></IconButton>
        </Favorites>
        {bookmarks.map(([icon, label]) => (
          <Bookmark key={label} href={`#${label}`}>
            <Icon name={icon} size={7} />
            {label}
          </Bookmark>
        ))}
        <Push />
        <Icon name="dots" size={6} />
        <IconButton aria-label="扩展"><Icon name="grid" size={8} /></IconButton>
        <Icon name="down" size={6} />
      </Bookmarks>
      <Logo>
        <svg width="20" height="20" viewBox="0 0 20 20" fill="none">
          <path d="M16 13.500Q13 18 8.500 17T4.500 10 11 4t5.500 6.500H6" stroke="#22c064" strokeWidth="3" />
          <path d="M2 17Q-1 10 17 2" stroke="#35c8a8" strokeWidth="2" />
        </svg>
      </Logo>

      <Main>
        <SideBar>
          <IconButton aria-label="收藏夹">
            <svg width="15" height="15" viewBox="0 0 15 15">
              <rect width="15" height="15" rx="1" fill="#fccc35" />
              <path d="M7.500 3l1.400 3 3.300.3-2.500 2.200.8 3.300-3-1.800-3 1.800.8-3.300L2.800 6.300 6.100 6z" fill="#fff" />
            </svg>
          </IconButton>
          <IconButton aria-label="微博">
            <svg width="15" height="15" viewBox="0 0 15 15">
              <rect width="15" height="15" rx="1" fill="#fcc736" />
              <ellipse cx="6.500" cy="9" rx="5" ry="3.800" fill="#e53935" />
              <ellipse cx="6.500" cy="9.300" rx="3.300" ry="2.500" fill="#fff" />
              <circle cx="6" cy="9.500" r="1.500" fill="#222" />
              <path d="M9 2.500q4 0 4 4M9.500 4.500q2 0 2 2" fill="none" stroke="#e53935" />
            </svg>
          </IconButton>
          <IconButton aria-label="邮箱">
            <svg width="15" height="15" viewBox="0 0 15 15">
              <rect x=".7" y=".7" width="13.600" height="13.600" fill="#fff" stroke="#f0604d" strokeWidth="1.200" strokeDasharray="3 3" />
              <rect x=".7" y=".7" width="13.600" height="13.600" fill="none" stroke="#52a9dd" strokeWidth="1.200" strokeDasharray="2 4" strokeDashoffset="-3.500" />
              <text x="3" y="10.500" fontSize="9" fontWeight="bold" fill="#e8513e">@</text>
            </svg>
          </IconButton>
          <Push />
          <IconButton aria-label="添加"><Icon name="plus" size={8} /></IconButton>
        </SideBar>

        <Content>
          <Commands>
            {commands.map((label, i) => (
              <Command key={label} $focused={i === 0}>{label}</Command>
            ))}
          </Commands>

          <Cad>
            <Strip $tall $width={181}>
              {menus.map(([label, key]) => (
                <MenuButton key={key}>
                  {label}(<u>{key}</u>)
                </MenuButton>
              ))}
            </Strip>
            <Strip $tall $width={389}><Tools groups={mainTools} /></Strip>
            <Strip $tall $width={89}><Tools groups={extraTools} /></Strip>
            <Strip $width={321}>
              <Icon name="layers" />
              <ComboBox $grow={128}>
                <Icon name="eye" size={7} />
                <Icon name="unlock" size={8} />
                <Icon name="sun" size={7} />
                <Icon name="swatch" size={7} />
                <Select aria-label="图层" defaultValue="0"><option>0</option></Select>
                <Icon name="down" size={6} />
              </ComboBox>
              <ComboBox $grow={61}>
                <Icon name="swatch" size={7} />
                <Select aria-label="颜色"><option>ByLayer</option></Select>
                <Icon name="down" size={6} />
              </ComboBox>
              <ComboBox $grow={93}>
                <LineSample />
                <Select aria-label="线型"><option>ByLayer</option></Select>
                <Icon name="down" size={6} />
              </ComboBox>
              <Tool name="brush" />
            </Strip>

            <Workspace>
              <Editor>
                <Stage>
                  <ToolColumn>
                    <ToolStack names={drawTools} height={206} />
                  </ToolColumn>
                  <Drawing>
                    <Canvas><Scene /></Canvas>
                    <SheetBar>
                      <IconButton aria-label="上一页"><Icon name="leftSolid" size={7} /></IconButton>
                      <IconButton aria-label="下一页"><Icon name="rightSolid" size={7} /></IconButton>
                      <SheetTab>模型</SheetTab>
                      <HScroll $width={136} $end={10}>
                        <Icon name="left" size={6} />
                        <HThumb />
                        <Icon name="right" size={6} />
                      </HScroll>
                    </SheetBar>
                  </Drawing>
                  <ToolColumn $wide>
                    <ToolStack names={orderTools} height={46} />
                  </ToolColumn>
                  <ToolColumn>
                    <ToolStack names={editTools} height={183} />
                    <ToolStack names={dimTools} height={60} />
                    <ToolStack names={["dimEdit"]} height={14} />
                  </ToolColumn>
                </Stage>
                <Console>
                  <ConsoleText>
                    <ConsoleLine $indent>技术支持，新增功能等联系QQ:827867134</ConsoleLine>
                    <ConsoleLine>命令:</ConsoleLine>
                    <Prompt>
                      命令:
                      <CommandInput />
                      <HScroll $width={36} $end={0}>
                        <Icon name="left" size={6} />
                        <HThumb />
                        <Icon name="right" size={6} />
                      </HScroll>
                    </Prompt>
                  </ConsoleText>
                  <ScrollTrack $pad={2}>
                    <Icon name="up" size={6} />
                    <Icon name="downDark" size={6} />
                  </ScrollTrack>
                </Console>
              </Editor>

              <Panel>
                <PanelHead>
                  <IconButton aria-label="关闭面板"><Icon name="close" size={5} /></IconButton>
                </PanelHead>
                <PanelSelect>
                  <Select aria-label="选择"><option>无选择</option></Select>
                  <Icon name="down" size={6} />
                </PanelSelect>
                <Properties>
                  <PropTable>
                    <colgroup>
                      <col width="10" />
                      <col width="30" />
                      <col />
                    </colgroup>
                    <tbody>
                      <tr>
                        <td><Expander aria-label="折叠" /></td>
                        <th className="group" colSpan="2">基本</th>
                      </tr>
                      {properties.map(([name, value]) => (
                        <tr key={name}>
                          <td />
                          <th scope="row">{name}</th>
                          <td>{value}</td>
                        </tr>
                      ))}
                    </tbody>
                  </PropTable>
                </Properties>
                <Description />
              </Panel>
            </Workspace>

            <CadStatus>
              <Coordinates>{"428.712008,  110.202276,  0.000000"}</Coordinates>
              <Mode>栅格</Mode>
              <Mode>正交</Mode>
              <Mode>极轴</Mode>
              <Mode $on>对象捕捉</Mode>
              <Mode $on>对象追踪</Mode>
              <Mode>DYN</Mode>
              <Mode>线宽</Mode>
              <Brand>
                <Icon name="cadRed" size={8} />
                <span><b>MxDraw</b>Software</span>
              </Brand>
            </CadStatus>
          </Cad>
        </Content>

        <ScrollTrack $pad={4}>
          <Icon name="up" size={8} />
          <ScrollThumb />
          <Icon name="downDark" size={8} />
        </ScrollTrack>
      </Main>

      <Footer>
        <FooterButton $gap={6}><Icon name="play" size={9} />快剪辑</FooterButton>
        <FooterButton $gap={10}><Icon name="news" size={9} />热点资讯</FooterButton>
        <FooterButton $gap={14} aria-label="加速"><Icon name="gauge" size={8} /></FooterButton>
        <FooterButton $gap={10} aria-label="火箭"><Icon name="rocket" size={8} /></FooterButton>
        <FooterButton $gap={8}><Icon name="download" size={8} />下载</FooterButton>
        <FooterButton $gap={10} aria-label="举报"><Icon name="flag" size={8} /></FooterButton>
        <FooterButton $gap={12} aria-label="内核"><Icon name="ie" size={8} /></FooterButton>
        <FooterButton $gap={11} aria-label="窗口"><Icon name="copyWin" size={8} /></FooterButton>
        <FooterButton $gap={10} aria-label="声音"><Icon name="sound" size={8} /></FooterButton>
        <FooterButton $gap={8}><Icon name="search" size={7} />100%</FooterButton>
        <Icon name="grip" size={6} />
      </Footer>
    </Page>
  </>
);

export default App;
